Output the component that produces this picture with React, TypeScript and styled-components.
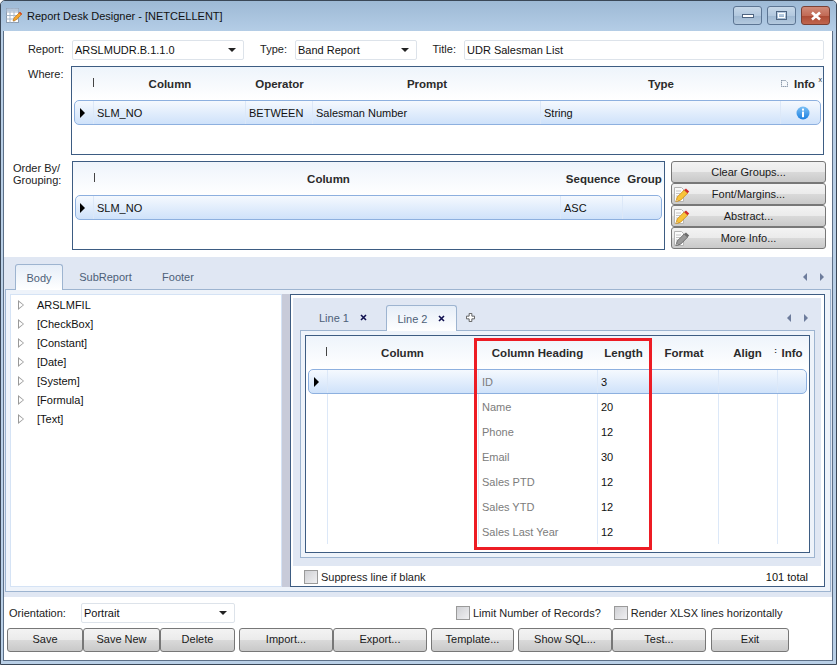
import React from "react";
import styled, { createGlobalStyle } from "styled-components";

const GlobalStyle = createGlobalStyle`
  html, body {
    margin: 0;
    padding: 0;
    background: #fff;
  }
  body {
    font-family: "Liberation Sans", Arial, sans-serif;
    font-size: 11px;
    color: #111;
  }
`;

// Window chrome
const Window = styled.div`
  width: 837px;
  height: 665px;
  box-sizing: border-box;
  display: flex;
  flex-direction: column;
  overflow: hidden;
  border: 1px solid #3a4757;
  border-radius: 5px 5px 0 0;
  background: #b9cfe6;
`;

const TitleBar = styled.div`
  height: 30px;
  flex: none;
  display: flex;
  align-items: center;
  padding: 0 6px 0 4px;
  background: linear-gradient(#9db9d5, #b4cde6);
`;

const TitleText = styled.span`
  margin-left: 4px;
  color: #111;
`;

const WinButtons = styled.div`
  margin-left: auto;
  display: flex;
  gap: 5px;
  margin-top: -1px;
`;

const WinButton = styled.div<{ $close?: boolean }>`
  box-sizing: border-box;
  width: 29px;
  height: 19px;
  display: flex;
  align-items: center;
  justify-content: center;
  border: 1px solid ${(p) => (p.$close ? "#7b4034" : "#5c7593")};
  border-radius: 3px;
  background: ${(p) =>
    p.$close
      ? "linear-gradient(#d08a78 0%, #c26b56 50%, #ad4c36 55%, #c0664f 100%)"
      : "linear-gradient(#c6d7e8 0%, #b3c9df 50%, #a0b9d2 55%, #b4c9de 100%)"};
`;

const Client = styled.div`
  flex: 1;
  margin: 0 3px 3px 2px;
  display: flex;
  flex-direction: column;
  background: #fff;
  border: 1px solid #5d7088;
  border-top: none;
  min-height: 0;
`;

// Upper form
const Upper = styled.div`
  height: 226px;
  flex: none;
  box-sizing: border-box;
  padding-top: 9px;
`;

const FieldRow = styled.div`
  display: grid;
  grid-template-columns: 68px 172px 51px 122px 47px 360px;
  height: 20px;
`;

const FieldLabel = styled.label`
  text-align: right;
  padding-right: 8px;
  line-height: 19px;
  color: #222;
`;

const InputBox = styled.div`
  box-sizing: border-box;
  height: 20px;
  display: flex;
  align-items: center;
  justify-content: space-between;
  padding: 0 7px 0 2px;
  border: 1px solid #dde3ea;
  border-radius: 2px;
  background: #fff;
  color: #111;
`;

const DropArrow = styled.span`
  width: 0;
  height: 0;
  border-left: 4px solid transparent;
  border-right: 4px solid transparent;
  border-top: 4px solid #222;
`;

const GridRowWrap = styled.div`
  display: flex;
  margin-top: 6px;
`;

const SideLabel = styled.div<{ $width: number; $pad: number; $top: number }>`
  width: ${(p) => p.$width}px;
  box-sizing: border-box;
  padding-left: ${(p) => p.$pad}px;
  padding-top: ${(p) => p.$top}px;
  line-height: 12px;
  color: #222;
`;

// Data grids
const GridFrame = styled.div<{ $w: number; $h: number }>`
  position: relative;
  box-sizing: border-box;
  width: ${(p) => p.$w}px;
  height: ${(p) => p.$h}px;
  border: 1px solid #3d5c82;
  background: #fff;
  flex: none;
`;

const HeadRow = styled.div<{ $cols: string }>`
  display: grid;
  grid-template-columns: ${(p) => p.$cols};
  height: 33px;
  padding: 0 3px;
  align-items: center;
  background: linear-gradient(#eef4fb, #ffffff);
  font-size: 11.5px;
  font-weight: bold;
  color: #2b2b2b;
`;

const HeadCell = styled.div`
  position: relative;
  text-align: center;
  white-space: nowrap;
`;

const ResizeTick = styled.span`
  display: block;
  width: 1px;
  height: 9px;
  margin: -3px 0 0 0;
  background: #444;
`;

const TickCell = styled.div`
  display: flex;
  justify-content: flex-end;
`;

const SelectedRow = styled.div<{ $cols: string }>`
  display: grid;
  grid-template-columns: ${(p) => p.$cols};
  box-sizing: border-box;
  height: 25px;
  margin: 0 2px;
  border: 1px solid #8db0df;
  border-radius: 5px;
  background: linear-gradient(#f5f9fe, #cfe2fa);
`;

const PlainRow = styled.div<{ $cols: string }>`
  display: grid;
  grid-template-columns: ${(p) => p.$cols};
  height: 25px;
  margin: 0 3px;
  line-height: 27px;
`;

const Cell = styled.div<{ $muted?: boolean; $center?: boolean }>`
  box-sizing: border-box;
  padding-left: 3px;
  line-height: inherit;
  white-space: nowrap;
  overflow: hidden;
  border-left: 1px solid #dce8f8;
  color: ${(p) => (p.$muted ? "#7c7c7c" : "#111")};
  display: ${(p) => (p.$center ? "flex" : "block")};
  align-items: center;
  justify-content: center;
`;

const SelectedCell = styled(Cell)`
  line-height: 24px;
`;

const ArrowCell = styled.div`
  display: flex;
  align-items: center;
  justify-content: center;
  padding-right: 4px;
`;

const RowArrow = styled.span`
  width: 0;
  height: 0;
  border-top: 5px solid transparent;
  border-bottom: 5px solid transparent;
  border-left: 5px solid #000;
`;

const Highlight = styled.div`
  position: absolute;
  left: 168px;
  top: 2px;
  width: 178px;
  height: 212px;
  box-sizing: border-box;
  border: 3px solid #ed1c24;
  pointer-events: none;
`;

// Side buttons
const SideButtons = styled.div`
  margin-left: 6px;
  width: 155px;
  display: flex;
  flex-direction: column;
`;

const buttonFace = `
  linear-gradient(#f3f3f3 0%, #ebebeb 48%, #d9d9d9 52%, #c9c9c9 100%)
`;

const SideButton = styled.div`
  position: relative;
  box-sizing: border-box;
  height: 22px;
  border: 1px solid #777;
  border-radius: 3px;
  background: ${buttonFace};
  text-align: center;
  line-height: 20px;
  color: #1a1a1a;
  & svg {
    position: absolute;
    left: 1px;
    top: 2px;
  }
`;

// Tabbed section
const TabSection = styled.div`
  height: 340px;
  flex: none;
  box-sizing: border-box;
  padding-top: 7px;
  background: #e0e7f3;
`;

const TabStrip = styled.div<{ $left: number }>`
  display: flex;
  align-items: flex-end;
  height: 25px;
  padding-left: ${(p) => p.$left}px;
`;

const Tab = styled.div<{ $active?: boolean; $width: number }>`
  position: relative;
  box-sizing: border-box;
  width: ${(p) => p.$width}px;
  height: 26px;
  display: flex;
  align-items: center;
  justify-content: center;
  gap: 11px;
  margin-bottom: ${(p) => (p.$active ? "-1px" : "0")};
  color: #4d5f78;
  border-radius: 3px 3px 0 0;
  border: 1px solid ${(p) => (p.$active ? "#9db4d0" : "transparent")};
  border-bottom: none;
  background: ${(p) =>
    p.$active ? "linear-gradient(#e6eef8, #ffffff)" : "transparent"};
  z-index: 1;
`;

const TabScroll = styled.div<{ $right: number }>`
  margin-left: auto;
  margin-right: ${(p) => p.$right}px;
  align-self: center;
  display: flex;
  gap: 13px;
`;

const ScrollArrow = styled.span<{ $dir: "left" | "right" }>`
  width: 0;
  height: 0;
  border-top: 4px solid transparent;
  border-bottom: 4px solid transparent;
  ${(p) =>
    p.$dir === "left"
      ? "border-right: 4px solid #6d7c9c;"
      : "border-left: 4px solid #6d7c9c;"}
`;

const TabPanel = styled.div`
  box-sizing: border-box;
  height: 303px;
  margin: 0 1px;
  padding: 4px;
  display: flex;
  border: 1px solid #9db4d0;
  background: #eef3fa;
`;

const TreePane = styled.div`
  box-sizing: border-box;
  width: 272px;
  height: 293px;
  background: #fff;
  border: 1px solid #d5e3f5;
`;

const TreeRow = styled.div`
  height: 19px;
  display: flex;
  align-items: center;
  padding-left: 7px;
  color: #111;
`;

const TreeArrow = styled.span`
  box-sizing: border-box;
  display: block;
  width: 0;
  height: 0;
  margin-right: 13px;
  border-top: 5px solid transparent;
  border-bottom: 5px solid transparent;
  border-left: 6px solid #999;
  position: relative;
  &::after {
    content: "";
    position: absolute;
    left: -5px;
    top: -3px;
    border-top: 3px solid transparent;
    border-bottom: 3px solid transparent;
    border-left: 4px solid #fff;
  }
`;

const Splitter = styled.div`
  width: 8px;
  background: #c8cbd9;
`;

const RightPane = styled.div`
  box-sizing: border-box;
  width: 535px;
  height: 293px;
  padding: 3px 3px 0 2px;
  display: flex;
  flex-direction: column;
  background: #fff;
  border: 1px solid #3d5c82;
`;

const InnerTabs = styled.div`
  box-sizing: border-box;
  height: 268px;
  flex: none;
  padding-top: 7px;
  background: #e0e7f3;
`;

const InnerPanel = styled.div`
  box-sizing: border-box;
  width: 515px;
  height: 228px;
  margin-left: 7px;
  padding: 4px;
  border: 1px solid #9db4d0;
  background: #eef3fa;
`;

const PaneFooter = styled.div`
  flex: 1;
  display: flex;
  align-items: center;
  justify-content: space-between;
  padding: 2px 13px 0 11px;
`;

const CheckWrap = styled.label`
  display: inline-flex;
  align-items: center;
  gap: 3px;
  color: #222;
`;

const CheckBox = styled.span`
  box-sizing: border-box;
  width: 14px;
  height: 14px;
  border: 1px solid #9a9a9a;
  background: linear-gradient(135deg, #cfd0d4, #f0f0f2);
`;

// Bottom bar
const BottomBar = styled.div`
  flex: 1;
  box-sizing: border-box;
  padding: 6px 0 0 3px;
  background: #fff;
`;

const OptionsRow = styled.div`
  display: flex;
  align-items: center;
  height: 20px;
  padding-left: 2px;
`;

const OrientationLabel = styled.span`
  width: 72px;
  color: #222;
`;

const OrientationBox = styled(InputBox)`
  width: 154px;
`;

const Checks = styled.div`
  margin-left: 221px;
  display: flex;
  gap: 13px;
`;

const ActionRow = styled.div`
  display: flex;
  margin-top: 5px;
`;

const ActionButton = styled.div<{ $w: number; $gap?: number }>`
  box-sizing: border-box;
  width: ${(p) => p.$w}px;
  height: 24px;
  margin-left: ${(p) => p.$gap ?? 0}px;
  border: 1px solid #777;
  border-radius: 3px;
  background: ${buttonFace};
  text-align: center;
  line-height: 21px;
  color: #1a1a1a;
`;

const InfoHead = styled.div`
  display: flex;
  align-items: center;
  justify-content: center;
  gap: 5px;
  margin-left: -8px;
`;

const HeadMark = styled.span`
  position: absolute;
  right: 0;
  top: -2px;
  font-size: 7px;
  font-weight: normal;
  line-height: 8px;
`;

const AlignDots = styled.span`
  position: absolute;
  right: 0;
  top: 0;
  font-size: 8px;
  font-weight: bold;
  line-height: 8px;
`;

const AppIcon = () => (
  <svg width="18" height="18" viewBox="0 0 18 18">
    <rect x="1.5" y="1.5" width="12" height="14" fill="#fff" stroke="#8c9cb0" />
    <path d="M1.5 5h12M1.5 8.5h12M1.5 12h12M5 1.5v14M9 1.5v14" stroke="#a9b8c9" />
    <rect x="1.5" y="1.5" width="12" height="3" fill="#b7c8dc" />
    <path d="M8 14l1-3 6-6 2 2-6 6z" fill="#f4a52c" stroke="#b96f12" strokeWidth="0.6" />
    <path d="M14 6l1-1 2 2-1 1z" fill="#d6402c" />
  </svg>
);

const PencilIcon = ({ grey }: { grey?: boolean }) => (
  <svg width="17" height="17" viewBox="0 0 17 17">
    <path d="M1.5 1.5h7l2 2v12h-9z" fill="#fbfbfb" stroke="#b5b5b5" />
    <path d="M3 5h5M3 7.5h4M3 10h3" stroke="#c4c4c4" />
    <path
      d="M3 15.5l1.2-4.5 7-7 3.4 3.2-7 7z"
      fill={grey ? "#9a9a9a" : "#f8c33a"}
      stroke={grey ? "#5f5f5f" : "#c98a14"}
      strokeWidth="0.8"
    />
    <path d="M11.2 4l1.8-1.6 3.2 3.2-1.6 1.6z" fill={grey ? "#6c6c6c" : "#d12a2a"} />
    <path d="M3 15.5l.6-2.3 1.7 1.6z" fill="#fff" stroke={grey ? "#5f5f5f" : "#c98a14"} strokeWidth="0.5" />
  </svg>
);

const InfoIcon = () => (
  <svg width="14" height="14" viewBox="0 0 14 14">
    <defs>
      <linearGradient id="infoFill" x1="0" y1="0" x2="0" y2="1">
        <stop offset="0" stopColor="#7cc0f5" />
        <stop offset="1" stopColor="#1a7fe0" />
      </linearGradient>
    </defs>
    <circle cx="7" cy="7" r="6.5" fill="url(#infoFill)" />
    <rect x="6" y="2.6" width="2" height="2" fill="#fff" />
    <rect x="6" y="5.6" width="2" height="5.6" fill="#fff" />
  </svg>
);

const ColumnsGlyph = () => (
  <svg width="9" height="9" viewBox="0 0 9 9">
    <path d="M1.5 1.5h4l2 2v4h-6z" fill="none" stroke="#5b6e86" strokeDasharray="1 1" />
  </svg>
);

const CloseGlyph = () => (
  <svg width="7" height="7" viewBox="0 0 7 7">
    <path d="M1 1l5 5M6 1l-5 5" stroke="#101050" strokeWidth="1.6" />
  </svg>
);

const PlusGlyph = () => (
  <svg width="9" height="9" viewBox="0 0 10 10">
    <path
      d="M3.5.5h3v3h3v3h-3v3h-3v-3h-3v-3h3z"
      fill="#fff"
      stroke="#555"
      strokeLinejoin="round"
    />
  </svg>
);

const whereCols = "18px 152px 67px 228px 240px 42px";
const whereHeadCols = "19px 152px 67px 228px 240px 41px";
const orderCols = "17px 467px 62px 41px";
const orderHeadCols = "19px 467px 62px 41px";
const lineCols = "18px 151px 119px 53px 68px 59px 30px";

const lineRows = [
  ["Name", "20"],
  ["Phone", "12"],
  ["Email", "30"],
  ["Sales PTD", "12"],
  ["Sales YTD", "12"],
  ["Sales Last Year", "12"],
];

const treeItems = [
  "ARSLMFIL",
  "[CheckBox]",
  "[Constant]",
  "[Date]",
  "[System]",
  "[Formula]",
  "[Text]",
];

const App: React.FC = () => {
  return (
    <Window>
      <GlobalStyle />
      <TitleBar>
        <AppIcon />
        <TitleText>Report Desk Designer - [NETCELLENT]</TitleText>
        <WinButtons>
          <WinButton>
            <svg width="12" height="6" viewBox="0 0 12 6">
              <rect x="0.5" y="1.5" width="11" height="3" fill="#fff" stroke="#4e6480" />
            </svg>
          </WinButton>
          <WinButton>
            <svg width="11" height="9" viewBox="0 0 11 9">
              <rect x="0.5" y="0.5" width="10" height="8" fill="none" stroke="#4e6480" />
              <rect x="2.5" y="2.5" width="6" height="4" fill="none" stroke="#fff" />
            </svg>
          </WinButton>
          <WinButton $close>
            <svg width="12" height="10" viewBox="0 0 12 10">
              <path d="M2 1.5l8 7M10 1.5l-8 7" stroke="#fff" strokeWidth="2.6" />
            </svg>
          </WinButton>
        </WinButtons>
      </TitleBar>

      <Client>
        <Upper>
          <FieldRow>
            <FieldLabel>Report:</FieldLabel>
            <InputBox>
              ARSLMUDR.B.1.1.0
              <DropArrow />
            </InputBox>
            <FieldLabel>Type:</FieldLabel>
            <InputBox>
              Band Report
              <DropArrow />
            </InputBox>
            <FieldLabel>Title:</FieldLabel>
            <InputBox>UDR Salesman List</InputBox>
          </FieldRow>

          <GridRowWrap>
            <SideLabel $width={67} $pad={24} $top={2}>
              Where:
            </SideLabel>
            <GridFrame $w={753} $h={89}>
              <HeadRow $cols={whereHeadCols}>
                <TickCell>
                  <ResizeTick />
                </TickCell>
                <HeadCell>Column</HeadCell>
                <HeadCell>Operator</HeadCell>
                <HeadCell>Prompt</HeadCell>
                <HeadCell>Type</HeadCell>
                <HeadCell>
                  <InfoHead>
                    <ColumnsGlyph />
                    Info
                  </InfoHead>
                  <HeadMark>x</HeadMark>
                </HeadCell>
              </HeadRow>
              <SelectedRow $cols={whereCols}>
                <ArrowCell>
                  <RowArrow />
                </ArrowCell>
                <SelectedCell>SLM_NO</SelectedCell>
                <SelectedCell>BETWEEN</SelectedCell>
                <SelectedCell>Salesman Number</SelectedCell>
                <SelectedCell>String</SelectedCell>
                <SelectedCell $center>
                  <InfoIcon />
                </SelectedCell>
              </SelectedRow>
            </GridFrame>
          </GridRowWrap>

          <GridRowWrap>
            <SideLabel $width={68} $pad={9} $top={1}>
              Order By/
              <br />
              Grouping:
            </SideLabel>
            <GridFrame $w={593} $h={89}>
              <HeadRow $cols={orderHeadCols}>
                <TickCell>
                  <ResizeTick />
                </TickCell>
                <HeadCell>Column</HeadCell>
                <HeadCell>Sequence</HeadCell>
                <HeadCell>Group</HeadCell>
              </HeadRow>
              <SelectedRow $cols={orderCols}>
                <ArrowCell>
                  <RowArrow />
                </ArrowCell>
                <SelectedCell>SLM_NO</SelectedCell>
                <SelectedCell>ASC</SelectedCell>
                <SelectedCell />
              </SelectedRow>
            </GridFrame>
            <SideButtons>
              <SideButton>Clear Groups...</SideButton>
              <SideButton>
                <PencilIcon />
                Font/Margins...
              </SideButton>
              <SideButton>
                <PencilIcon />
                Abstract...
              </SideButton>
              <SideButton>
                <PencilIcon grey />
                More Info...
              </SideButton>
            </SideButtons>
          </GridRowWrap>
        </Upper>

        <TabSection>
          <TabStrip $left={11}>
            <Tab $active $width={48}>
              Body
            </Tab>
            <Tab $width={85}>SubReport</Tab>
            <Tab $width={60}>Footer</Tab>
            <TabScroll $right={8}>
              <ScrollArrow $dir="left" />
              <ScrollArrow $dir="right" />
            </TabScroll>
          </TabStrip>
          <TabPanel>
            <TreePane>
              {treeItems.map((item) => (
                <TreeRow key={item}>
                  <TreeArrow />
                  {item}
                </TreeRow>
              ))}
            </TreePane>
            <Splitter />
            <RightPane>
              <InnerTabs>
                <TabStrip $left={7}>
                  <Tab $width={86}>
                    Line 1 <CloseGlyph />
                  </Tab>
                  <Tab $active $width={71}>
                    Line 2 <CloseGlyph />
                  </Tab>
                  <Tab $width={26}>
                    <PlusGlyph />
                  </Tab>
                  <TabScroll $right={13}>
                    <ScrollArrow $dir="left" />
                    <ScrollArrow $dir="right" />
                  </TabScroll>
                </TabStrip>
                <InnerPanel>
                  <GridFrame $w={505} $h={218}>
                    <HeadRow $cols={lineCols}>
                      <TickCell>
                        <ResizeTick />
                      </TickCell>
                      <HeadCell>Column</HeadCell>
                      <HeadCell>Column Heading</HeadCell>
                      <HeadCell>Length</HeadCell>
                      <HeadCell>Format</HeadCell>
                      <HeadCell>
                        Align
                        <AlignDots>:</AlignDots>
                      </HeadCell>
                      <HeadCell>Info</HeadCell>
                    </HeadRow>
                    <SelectedRow $cols={lineCols}>
                      <ArrowCell>
                        <RowArrow />
                      </ArrowCell>
                      <SelectedCell />
                      <SelectedCell $muted>ID</SelectedCell>
                      <SelectedCell>3</SelectedCell>
                      <SelectedCell />
                      <SelectedCell />
                      <SelectedCell />
                    </SelectedRow>
                    {lineRows.map(([heading, length]) => (
                      <PlainRow $cols={lineCols} key={heading}>
                        <div />
                        <Cell />
                        <Cell $muted>{heading}</Cell>
                        <Cell>{length}</Cell>
                        <Cell />
                        <Cell />
                        <Cell />
                      </PlainRow>
                    ))}
                    <Highlight />
                  </GridFrame>
                </InnerPanel>
              </InnerTabs>
              <PaneFooter>
                <CheckWrap>
                  <CheckBox />
                  Suppress line if blank
                </CheckWrap>
                <span>101 total</span>
              </PaneFooter>
            </RightPane>
          </TabPanel>
        </TabSection>

        <BottomBar>
          <OptionsRow>
            <OrientationLabel>Orientation:</OrientationLabel>
            <OrientationBox>
              Portrait
              <DropArrow />
            </OrientationBox>
            <Checks>
              <CheckWrap>
                <CheckBox />
                Limit Number of Records?
              </CheckWrap>
              <CheckWrap>
                <CheckBox />
                Render XLSX lines horizontally
              </CheckWrap>
            </Checks>
          </OptionsRow>
          <ActionRow>
            <ActionButton $w={76}>Save</ActionButton>
            <ActionButton $w={77}>Save New</ActionButton>
            <ActionButton $w={75}>Delete</ActionButton>
            <ActionButton $w={94} $gap={4}>
              Import...
            </ActionButton>
            <ActionButton $w={94}>Export...</ActionButton>
            <ActionButton $w={83} $gap={4}>
              Template...
            </ActionButton>
            <ActionButton $w={94} $gap={4}>
              Show SQL...
            </ActionButton>
            <ActionButton $w={94}>Test...</ActionButton>
            <ActionButton $w={78} $gap={5}>
              Exit
            </ActionButton>
          </ActionRow>
        </BottomBar>
      </Client>
    </Window>
  );
};

export default App;
